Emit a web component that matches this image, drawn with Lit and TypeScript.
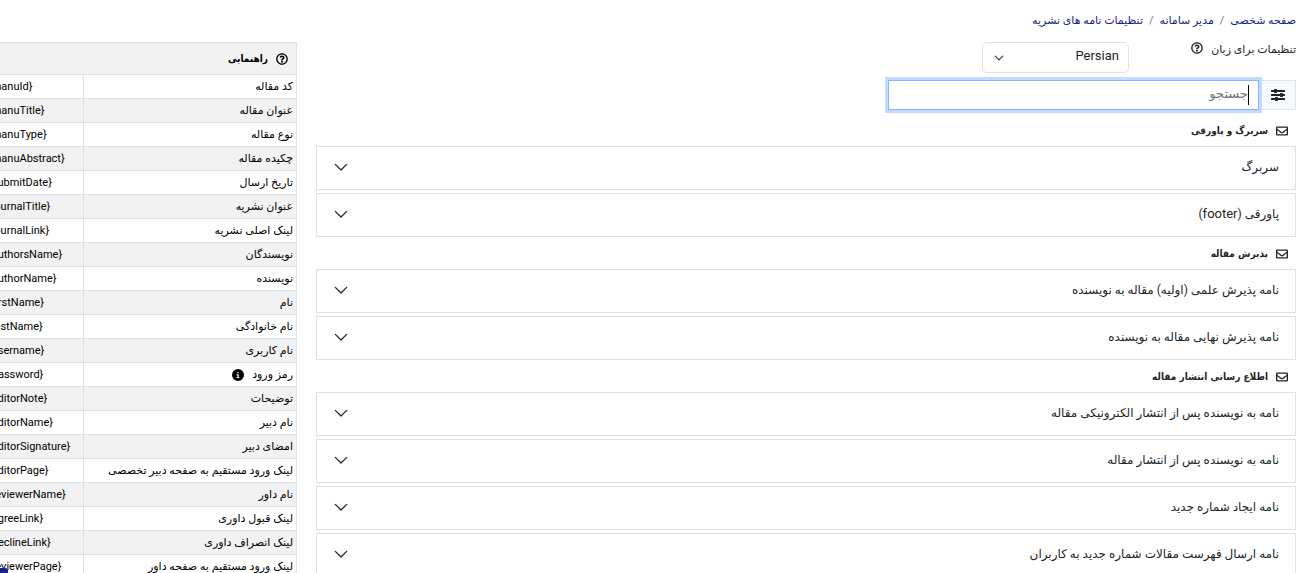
import { LitElement, html, css, svg } from "lit";
import { customElement, state } from "lit/decorators.js";

const envelope = svg`<svg class="icon" viewBox="0 0 512 512" width="12" height="12" aria-hidden="true"><path d="M464 64H48C21.500 64 0 85.500 0 112v288c0 26.500 21.500 48 48 48h416c26.500 0 48-21.500 48-48V112c0-26.500-21.500-48-48-48zm-8 56v35c-22 18-58 47-134 106-17 13-50 45-66 44-16 1-49-31-66-44C114 202 78 173 56 155v-35h400zM56 392V227c23 18 55 43 104 82 22 17 60 55 96 54 36 1 74-37 96-54 49-39 81-64 104-82v165H56z"/></svg>`;
const question = svg`<svg class="icon" viewBox="0 0 512 512" width="12" height="12" aria-hidden="true"><path d="M256 8C119 8 8 119 8 256s111 248 248 248 248-111 248-248S393 8 256 8zm0 440c-106.500 0-192-85.900-192-192 0-106.200 85.800-192 192-192 106.100 0 192 85.800 192 192 0 106.100-85.900 192-192 192z"/><path d="M363 201c0 67-73 68-73 93v8c0 7-5 12-12 12h-46c-7 0-12-5-12-12v-11c0-36 27-50 48-62 18-10 29-17 29-30 0-18-22-29-40-29-23 0-34 11-49 30-4 5-11 6-17 2l-27-21c-5-4-6-11-3-16 24-35 54-55 101-55 49 0 101 39 101 91zM298 368c0 23-19 42-42 42s-42-19-42-42 19-42 42-42 42 19 42 42z"/></svg>`;
const info = svg`<svg class="icon" viewBox="0 0 512 512" width="12" height="12" aria-hidden="true"><path d="M256 512a256 256 0 1 0 0-512 256 256 0 1 0 0 512zm-40-176h24v-64h-24c-13.300 0-24-10.700-24-24s10.700-24 24-24h48c13.300 0 24 10.700 24 24v88h8c13.300 0 24 10.700 24 24s-10.700 24-24 24h-80c-13.300 0-24-10.700-24-24s10.700-24 24-24zm40-208a32 32 0 1 1 0 64 32 32 0 1 1 0-64z"/></svg>`;
const sliders = svg`<svg class="icon" viewBox="0 0 14 14" width="14" height="14" aria-hidden="true"><rect y="2" width="14" height="2" rx=".5"/><rect x="3" y="1" width="3" height="4" rx=".8"/><rect y="6" width="14" height="2" rx=".5"/><rect x="9" y="5" width="3" height="4" rx=".8"/><rect y="10" width="14" height="2" rx=".5"/><rect x="4" y="9" width="3" height="4" rx=".8"/></svg>`;
const chevron = svg`<svg class="chevron" viewBox="0 0 16 16" width="14" height="14" aria-hidden="true"><path d="M1.500 5l6.500 6.500L14.500 5" fill="none" stroke="currentColor" stroke-width="1.500" stroke-linecap="round" stroke-linejoin="round"/></svg>`;
const caret = svg`<svg class="chevron" viewBox="0 0 16 16" width="10" height="10" aria-hidden="true"><path d="M2 5l6 6 6-6" fill="none" stroke="#343a40" stroke-width="2" stroke-linecap="round" stroke-linejoin="round"/></svg>`;

const sections = [
  { title: "سربرگ و پاورقی", items: ["سربرگ", "پاورقی (footer)"] },
  { title: "پذیرش مقاله", items: ["نامه پذیرش علمی (اولیه) مقاله به نویسنده", "نامه پذیرش نهایی مقاله به نویسنده"] },
  {
    title: "اطلاع رسانی انتشار مقاله",
    items: [
      "نامه به نویسنده پس از انتشار الکترونیکی مقاله",
      "نامه به نویسنده پس از انتشار مقاله",
      "نامه ایجاد شماره جدید",
      "نامه ارسال فهرست مقالات شماره جدید به کاربران",
    ],
  },
];

const variables: [string, string][] = [
  ["کد مقاله", "manuId"],
  ["عنوان مقاله", "manuTitle"],
  ["نوع مقاله", "manuType"],
  ["چکیده مقاله", "manuAbstract"],
  ["تاریخ ارسال", "submitDate"],
  ["عنوان نشریه", "journalTitle"],
  ["لینک اصلی نشریه", "journalLink"],
  ["نویسندگان", "authorsName"],
  ["نویسنده", "authorName"],
  ["نام", "firstName"],
  ["نام خانوادگی", "lastName"],
  ["نام کاربری", "username"],
  ["رمز ورود", "password"],
  ["توضیحات", "editorNote"],
  ["نام دبیر", "editorName"],
  ["امضای دبیر", "editorSignature"],
  ["لینک ورود مستقیم به صفحه دبیر تخصصی", "editorPage"],
  ["نام داور", "reviewerName"],
  ["لینک قبول داوری", "agreeLink"],
  ["لینک انصراف داوری", "declineLink"],
  ["لینک ورود مستقیم به صفحه داور", "reviewerPage"],
];

// Latin words sit one pixel size above the Persian text around them.
const mixed = (text: string) =>
  text.split(/([A-Za-z]+)/).map((part) => (/[A-Za-z]/.test(part) ? html`<span class="latin">${part}</span>` : part));

@customElement("app-root")
export class AppRoot extends LitElement {
  @state() private open = "";

  static styles = css`
    :host {
      display: block;
      height: 100vh;
      overflow: hidden;
      background: #fff;
      color: #212529;
      font: 11px/16px Roboto, "DejaVu Sans", sans-serif;
    }
    * { box-sizing: border-box; }
    .icon { fill: currentColor; flex: none; display: block; }
    .chevron { flex: none; display: block; }
    .page { padding: 12px 5px 0 0; }
    .crumbs {
      display: flex;
      margin: 0;
      padding: 0;
      list-style: none;
      height: 18px;
      align-items: center;
    }
    .crumbs li + li::before { content: "/"; padding: 0 6px; color: #6c757d; }
    .crumbs a { color: #14238a; text-decoration: none; }
    .columns {
      display: grid;
      grid-template-columns: minmax(0, 33fr) minmax(0, 10fr);
      gap: 19px;
      padding-top: 12px;
      align-items: start;
    }
    .language { display: flex; align-items: flex-start; gap: 11px; }
    .language label { display: flex; gap: 8px; width: 156px; }
    .select { position: relative; display: flex; }
    select {
      appearance: none;
      width: 147px;
      height: 31px;
      padding: 0 9px 3px 30px;
      border: 1px solid #dee2e6;
      border-radius: 5px;
      background: #fff;
      color: #212529;
      font: 13px/20px Roboto, sans-serif;
    }
    .select .chevron { position: absolute; left: 12px; top: 11px; }
    .search { display: flex; width: 408px; padding-top: 7px; }
    .addon {
      display: flex;
      flex: none;
      align-items: center;
      justify-content: center;
      width: 37px;
      height: 30px;
      border: 1px solid #dee2e6;
      background: #f8f9fa;
    }
    .field { position: relative; flex: 1; display: flex; }
    .search input {
      width: 100%;
      height: 30px;
      padding: 0 10px 4px;
      border: 1px solid #86b7fe;
      border-radius: 0;
      outline: none;
      box-shadow: 0 0 0 3px #c2dbfe;
      font: 13px/20px "DejaVu Sans", sans-serif;
      color: #212529;
      caret-color: transparent;
    }
    .search input::placeholder { color: #6c757d; opacity: 1; }
    .field::after {
      content: "";
      position: absolute;
      right: 10px;
      top: 5px;
      width: 1px;
      height: 20px;
      background: #000;
    }
    h2 {
      display: flex;
      align-items: center;
      gap: 8px;
      height: 32px;
      margin: 0;
      padding: 2px 8px 0 0;
    }
    h2, th { font: bold 10px/16px "DejaVu Sans Condensed", "DejaVu Sans", sans-serif; }
    .search + section h2 { height: 36px; padding-top: 6px; }
    .items { display: grid; gap: 3px; }
    .item {
      display: flex;
      align-items: center;
      justify-content: space-between;
      width: 100%;
      height: 44px;
      padding: 0 16px 2px 17px;
      border: 1px solid #dee2e6;
      background: #fff;
      color: #212529;
      text-align: right;
      font: 12px/20px Roboto, "DejaVu Sans", sans-serif;
    }
    .latin { font-size: 13px; }
    aside { overflow: hidden; }
    table {
      width: 313px;
      table-layout: fixed;
      border-collapse: collapse;
      color: #000;
    }
    .name { width: 213px; }
    th, td { border: 1px solid #dee2e6; text-align: right; }
    th { height: 32px; padding: 0 8px 0 0; background: #f2f2f2; }
    th span { display: flex; align-items: center; gap: 8px; }
    td { height: 24px; padding: 0 3px 0 3px; }
    tbody tr:nth-child(even) td { background: #f2f2f2; }
    td.code { text-align: left; direction: ltr; }
    .hint { display: inline-flex; align-items: center; gap: 8px; vertical-align: top; }
    .float {
      position: fixed;
      left: -28px;
      bottom: -31px;
      width: 36px;
      height: 36px;
      padding: 0;
      border: 0;
      border-radius: 3px;
      background: #14238a;
    }
  `;

  firstUpdated() {
    this.renderRoot.querySelector<HTMLInputElement>("#search")?.focus();
  }

  render() {
    return html`
      <div class="page" dir="rtl" lang="fa">
        <nav>
          <ol class="crumbs">
            <li><a href="#">صفحه شخصی</a></li>
            <li><a href="#">مدیر سامانه</a></li>
            <li><a href="#">تنظیمات نامه های نشریه</a></li>
          </ol>
        </nav>
        <div class="columns">
          <main>
            <div class="language">
              <label for="lang">تنظیمات برای زبان ${question}</label>
              <div class="select">
                <select id="lang"><option>Persian</option></select>
                ${caret}
              </div>
            </div>
            <div class="search">
              <label class="addon" for="search">${sliders}</label>
              <div class="field"><input id="search" type="text" placeholder="جستجو" /></div>
            </div>
            ${sections.map(
              (s) => html`<section>
                <h2>${envelope}<span>${s.title}</span></h2>
                <div class="items">
                  ${s.items.map(
                    (t) => html`<button
                      class="item"
                      type="button"
                      aria-expanded=${this.open === t}
                      @click=${() => (this.open = this.open === t ? "" : t)}
                    ><span>${mixed(t)}</span>${chevron}</button>`
                  )}
                </div>
              </section>`
            )}
          </main>
          <aside>
            <table>
              <colgroup><col class="name" /><col /></colgroup>
              <thead>
                <tr><th colspan="2"><span>${question} راهنمایی</span></th></tr>
              </thead>
              <tbody>
                ${variables.map(
                  ([label, code]) => html`<tr>
                    <td>${code === "password" ? html`<span class="hint">${label} ${info}</span>` : label}</td>
                    <td class="code">{${code}}</td>
                  </tr>`
                )}
              </tbody>
            </table>
          </aside>
        </div>
        <button class="float" type="button" aria-label="منو"></button>
      </div>
    `;
  }
}
